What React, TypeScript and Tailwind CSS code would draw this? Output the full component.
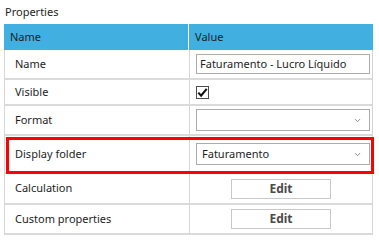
import { ChevronDown } from 'lucide-react';

const font = { fontFamily: '"Segoe UI", "Noto Sans", "Open Sans", sans-serif' };

function Label({ children }: { children: React.ReactNode }) {
  return (
    <div className="w-[185px] shrink-0 self-stretch flex items-center pl-[10px] border-r border-[#d6d6d6]">
      {children}
    </div>
  );
}

function Select({ value }: { value?: string }) {
  return (
    <div className="w-[174px] h-[22px] border border-[#acacac] bg-white flex items-center justify-between pl-[5px] pr-[7px]">
      <span>{value}</span>
      <ChevronDown size={9} strokeWidth={1.8} className="text-[#555]" />
    </div>
  );
}

function EditButton() {
  return (
    <button className="w-[100px] h-[20px] border border-[#c8c8c8] bg-white text-[#4a4a4a] text-[12px] font-bold leading-none">
      Edit
    </button>
  );
}

export default function App() {
  return (
    <div className="w-[379px] h-[245px] bg-white text-[11px] text-[#1e1e1e]" style={font}>
      <div className="h-[24px] pl-[5px] flex items-center">Properties</div>
      <div className="ml-[4px] w-[369px] border-x border-[#d6d6d6]">
        <div className="h-[26px] flex bg-[#41afe0] -mx-px">
          <div className="w-[185px] border-r border-white flex items-center pl-[6px]">Name</div>
          <div className="flex-1 flex items-center pl-[6px]">Value</div>
        </div>

        <div className="h-[30px] flex items-center border-b-2 border-[#dadada]">
          <Label>Name</Label>
          <div className="pl-[6px]">
            <div className="w-[174px] h-[20px] border border-[#acacac] flex items-center pl-[3px] whitespace-nowrap">
              Faturamento - Lucro Líquido
            </div>
          </div>
        </div>

        <div className="h-[26px] flex items-center border-b-2 border-[#dadada]">
          <Label>Visible</Label>
          <div className="pl-[6px]">
            <div className="w-[13px] h-[13px] border border-[#4d4d4d] flex items-center justify-center">
              <svg width="11" height="11" viewBox="0 0 11 11">
                <path d="M1.3 5.6 L4.1 8.6 L9.7 1.8" fill="none" stroke="#111" strokeWidth="2.1" />
              </svg>
            </div>
          </div>
        </div>

        <div className="h-[30px] flex items-center border-b-2 border-[#dadada]">
          <Label>Format</Label>
          <div className="pl-[6px]">
            <Select />
          </div>
        </div>

        <div className="relative h-[38px] flex items-center border-b-2 border-[#dadada]">
          <Label>Display folder</Label>
          <div className="pl-[6px]">
            <Select value="Faturamento" />
          </div>
          <div className="absolute top-[1px] left-[1px] -right-[2px] -bottom-[2px] border-[3px] border-[#ff0000] pointer-events-none" />
        </div>

        <div className="h-[31px] flex items-center border-b-2 border-[#dadada]">
          <Label>Calculation</Label>
          <div className="flex-1 flex justify-center">
            <EditButton />
          </div>
        </div>

        <div className="h-[30px] flex items-center border-b-2 border-[#dadada]">
          <Label>Custom properties</Label>
          <div className="flex-1 flex justify-center">
            <EditButton />
          </div>
        </div>
      </div>
    </div>
  );
}
